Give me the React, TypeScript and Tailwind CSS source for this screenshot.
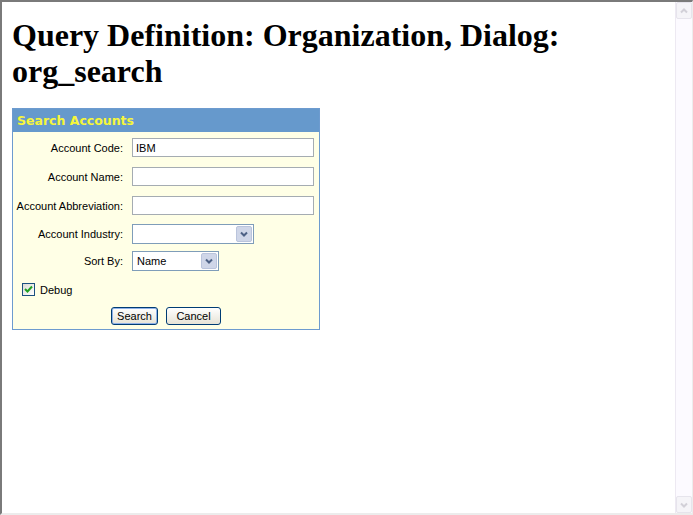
import { ReactNode } from 'react'

const ui = "font-['Liberation_Sans',Arial,sans-serif] text-[11px] text-black"

function Chevron({ up = false, color }: { up?: boolean; color: string }) {
  return (
    <svg width="8" height="6" viewBox="0 0 8 6" className={up ? 'rotate-180' : ''}>
      <path d="M1 1.5 L4 4.5 L7 1.5" fill="none" stroke={color} strokeWidth="2" />
    </svg>
  )
}

function Row({ label, children, className = '' }: { label: string; children: ReactNode; className?: string }) {
  return (
    <div className={`flex h-[19px] items-center ${className}`}>
      <div className={`w-[111px] pr-[1px] pt-[1px] text-right ${ui}`}>{label}</div>
      <div className="ml-[8px] flex">{children}</div>
    </div>
  )
}

function TextBox({ value = '' }: { value?: string }) {
  return (
    <div className={`flex h-[19px] w-[182px] items-center border border-[#a5acb2] bg-white px-[3px] pt-[1px] ${ui}`}>
      {value}
    </div>
  )
}

function Select({ width, value = '' }: { width: string; value?: string }) {
  return (
    <div className={`flex h-[20px] ${width} items-center border border-[#7f9db9] bg-white p-[1px] ${ui}`}>
      <span className="flex-1 pl-[3px] pt-[1px]">{value}</span>
      <span className="flex h-full w-[16px] items-center justify-center rounded-[2px] border border-[#bac4dc] bg-[#cfd6e8]">
        <Chevron color="#4d6185" />
      </span>
    </div>
  )
}

function XpButton({ label, width, focused = false }: { label: string; width: string; focused?: boolean }) {
  return (
    <button
      className={`flex h-[18px] ${width} items-center justify-center rounded-[3px] border border-[#003c74] bg-gradient-to-b from-white to-[#e6e3d6] ${
        focused ? 'shadow-[inset_0_0_0_1px_#8fb1e8]' : ''
      } ${ui}`}
    >
      {label}
    </button>
  )
}

export default function App() {
  return (
    <div className="flex h-[515px] w-[693px] border-t-2 border-l-2 border-b-2 border-r border-t-[#7a7a7a] border-l-[#7a7a7a] border-b-[#ececec] border-r-[#ececec] bg-white">
      <div className="flex-1 pl-[10px] pt-[15px]">
        <h1 className="font-['Liberation_Serif','Times_New_Roman',serif] text-[32px] font-bold leading-[36px] text-black">
          Query Definition: Organization, Dialog: org_search
        </h1>

        {/* Search panel */}
        <div className="mt-[19px] w-[308px] border border-[#6d9bcf]">
          <div className="flex h-[23px] items-center bg-[#6699cc] pl-[4px] pt-[2px]">
            <span className="font-['DejaVu_Sans',Verdana,sans-serif] text-[12.5px] font-bold text-[#f6f63a]">
              Search Accounts
            </span>
          </div>
          <div className="bg-[#ffffe6] pt-[6px] pb-[4px]">
            <Row label="Account Code:">
              <TextBox value="IBM" />
            </Row>
            <Row label="Account Name:" className="mt-[10px]">
              <TextBox />
            </Row>
            <Row label="Account Abbreviation:" className="mt-[10px]">
              <TextBox />
            </Row>
            <Row label="Account Industry:" className="mt-[9px]">
              <Select width="w-[122px]" />
            </Row>
            <Row label="Sort By:" className="mt-[8px]">
              <Select width="w-[87px]" value="Name" />
            </Row>

            <div className="mt-[13px] flex h-[13px] items-center pl-[9px]">
              <span className="flex h-[13px] w-[13px] items-center justify-center border border-[#1c5180] bg-gradient-to-br from-[#dcdcd6] to-white">
                <svg width="9" height="9" viewBox="0 0 9 9">
                  <path d="M1 4 L3.5 6.5 L8 1.5" fill="none" stroke="#21a121" strokeWidth="2" />
                </svg>
              </span>
              <span className={`ml-[5px] pt-[1px] ${ui}`}>Debug</span>
            </div>

            <div className="mt-[11px] flex justify-center gap-[8px]">
              <XpButton label="Search" width="w-[47px]" focused />
              <XpButton label="Cancel" width="w-[55px]" />
            </div>
          </div>
        </div>
      </div>

      {/* disabled vertical scrollbar */}
      <div className="flex w-[17px] flex-col border-l border-[#ede9f2] bg-[#fcfaff]">
        <div className="flex h-[17px] items-center justify-center rounded-[2px] border border-[#e6e4ec] bg-[#f5f4f8]">
          <Chevron up color="#d2d0d8" />
        </div>
        <div className="flex-1" />
        <div className="flex h-[17px] items-center justify-center rounded-[2px] border border-[#e6e4ec] bg-[#f5f4f8]">
          <Chevron color="#d2d0d8" />
        </div>
      </div>
    </div>
  )
}
